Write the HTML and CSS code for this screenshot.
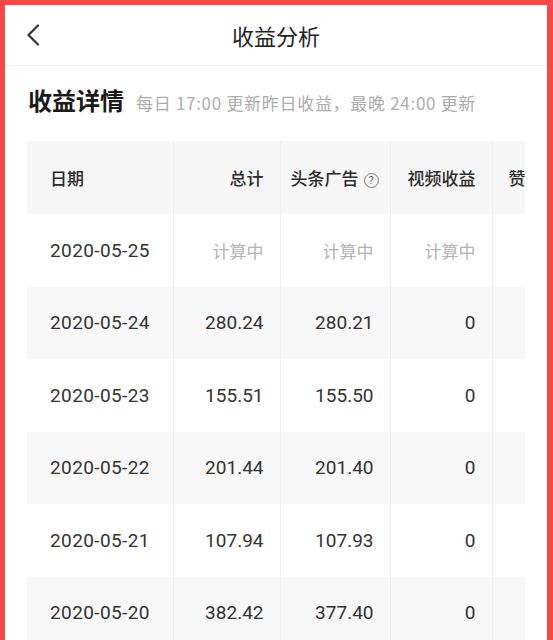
FILE: index.html
```
<!DOCTYPE html>
<html lang="zh-CN">
<head>
<meta charset="utf-8">
<title>收益分析</title>
<link rel="stylesheet" href="styles.css">
</head>
<body>
<div class="frame">
  <header class="topbar">
    <span class="back">
      <svg width="14" height="22" viewBox="0 0 14 22"><path d="M12 1.5 L2.5 11 L12 20.5" fill="none" stroke="#333" stroke-width="2.2" stroke-linecap="round" stroke-linejoin="round"/></svg>
    </span>
    <h1 class="title">收益分析</h1>
  </header>
  <section class="section">
    <div class="section-head">
      <h2 class="section-title">收益详情</h2>
      <span class="section-sub">每日 17:00 更新昨日收益，最晚 24:00 更新</span>
    </div>
    <div class="table-wrap">
      <table class="grid">
        <colgroup>
          <col class="c-date"><col class="c-total"><col class="c-ad"><col class="c-video"><col class="c-like">
        </colgroup>
        <thead>
          <tr>
            <th class="left">日期</th>
            <th>总计</th>
            <th class="ad-head">头条广告<span class="help">?</span></th>
            <th>视频收益</th>
            <th class="clip">赞</th>
          </tr>
        </thead>
        <tbody>
          <tr>
            <td class="left date">2020-05-25</td>
            <td class="pending">计算中</td>
            <td class="pending">计算中</td>
            <td class="pending">计算中</td>
            <td></td>
          </tr>
          <tr class="alt">
            <td class="left date">2020-05-24</td>
            <td class="num">280.24</td>
            <td class="num">280.21</td>
            <td class="num">0</td>
            <td></td>
          </tr>
          <tr>
            <td class="left date">2020-05-23</td>
            <td class="num">155.51</td>
            <td class="num">155.50</td>
            <td class="num">0</td>
            <td></td>
          </tr>
          <tr class="alt">
            <td class="left date">2020-05-22</td>
            <td class="num">201.44</td>
            <td class="num">201.40</td>
            <td class="num">0</td>
            <td></td>
          </tr>
          <tr>
            <td class="left date">2020-05-21</td>
            <td class="num">107.94</td>
            <td class="num">107.93</td>
            <td class="num">0</td>
            <td></td>
          </tr>
          <tr class="alt">
            <td class="left date">2020-05-20</td>
            <td class="num">382.42</td>
            <td class="num">377.40</td>
            <td class="num">0</td>
            <td></td>
          </tr>
        </tbody>
      </table>
    </div>
  </section>
</div>
</body>
</html>
```
FILE: styles.css
```
html, body {
  margin: 0;
  padding: 0;
  background: #ffffff;
}
body {
  font-family: "Roboto", "Noto Sans CJK SC", sans-serif;
  color: #333333;
}
.frame {
  box-sizing: border-box;
  width: 553px;
  height: 640px;
  overflow: hidden;
  border-top: 5px solid #f44848;
  border-left: 5px solid #f44848;
  border-right: 6px solid #f44848;
  background: #ffffff;
}
.topbar {
  position: relative;
  height: 60px;
  display: flex;
  align-items: center;
  justify-content: center;
  border-bottom: 1px solid #f1f1f1;
}
.back {
  position: absolute;
  left: 21px;
  top: 19px;
  width: 14px;
  height: 22px;
  display: flex;
}
.title {
  margin: 0;
  font-family: "Noto Sans CJK SC", sans-serif;
  font-size: 22px;
  font-weight: 400;
  color: #222222;
  line-height: 30px;
}
.section {
  padding: 18px 0 0 22px;
}
.section-head {
  display: flex;
  align-items: baseline;
  gap: 12px;
  height: 32px;
  padding-left: 1px;
}
.section-title {
  margin: 0;
  font-family: "Noto Sans CJK SC", sans-serif;
  font-size: 24px;
  font-weight: 700;
  line-height: 32px;
  color: #1a1a1a;
}
.section-sub {
  font-family: "Noto Sans CJK SC", sans-serif;
  font-size: 17px;
  letter-spacing: 0.7px;
  color: #acacac;
  line-height: 32px;
  white-space: nowrap;
}
.table-wrap {
  margin-top: 25px;
  width: 498px;
  overflow: hidden;
}
.grid {
  border-collapse: collapse;
  table-layout: fixed;
  width: 567px;
}
.c-date { width: 146px; }
.c-total { width: 107px; }
.c-ad { width: 110px; }
.c-video { width: 102px; }
.c-like { width: 102px; }
.grid th, .grid td {
  padding: 0 16px 0 0;
  text-align: right;
  vertical-align: middle;
  white-space: nowrap;
  overflow: hidden;
  border-left: 1px solid #f0f0f0;
}
.grid th:first-child, .grid td:first-child {
  border-left: none;
}
.grid thead tr {
  height: 73px;
  background: #f7f7f7;
}
.grid th {
  font-family: "Noto Sans CJK SC", sans-serif;
  font-size: 17px;
  font-weight: 500;
  color: #2b2b2b;
}
.grid tbody tr {
  height: 72.5px;
  background: #ffffff;
}
.grid tbody tr.alt {
  background: #f8f8f8;
}
.grid .left {
  text-align: left;
  padding: 0 0 0 23px;
}
.grid th.ad-head {
  padding-right: 11px;
}
.grid th.clip {
  text-align: left;
  padding: 0 0 0 16px;
}
.help {
  display: inline-flex;
  align-items: center;
  justify-content: center;
  box-sizing: border-box;
  width: 15px;
  height: 15px;
  margin-left: 5px;
  border: 1.2px solid #777777;
  border-radius: 50%;
  font-family: "Roboto", sans-serif;
  font-size: 11px;
  font-weight: 400;
  color: #666666;
  line-height: 1;
  vertical-align: 1px;
}
.date {
  font-family: "Roboto", sans-serif;
  font-size: 19px;
  letter-spacing: 0.4px;
  color: #333333;
}
.num {
  font-family: "Roboto", sans-serif;
  font-size: 19px;
  color: #333333;
}
.pending {
  font-family: "Noto Sans CJK SC", sans-serif;
  font-size: 17px;
  color: #b3b3b3;
}
```
